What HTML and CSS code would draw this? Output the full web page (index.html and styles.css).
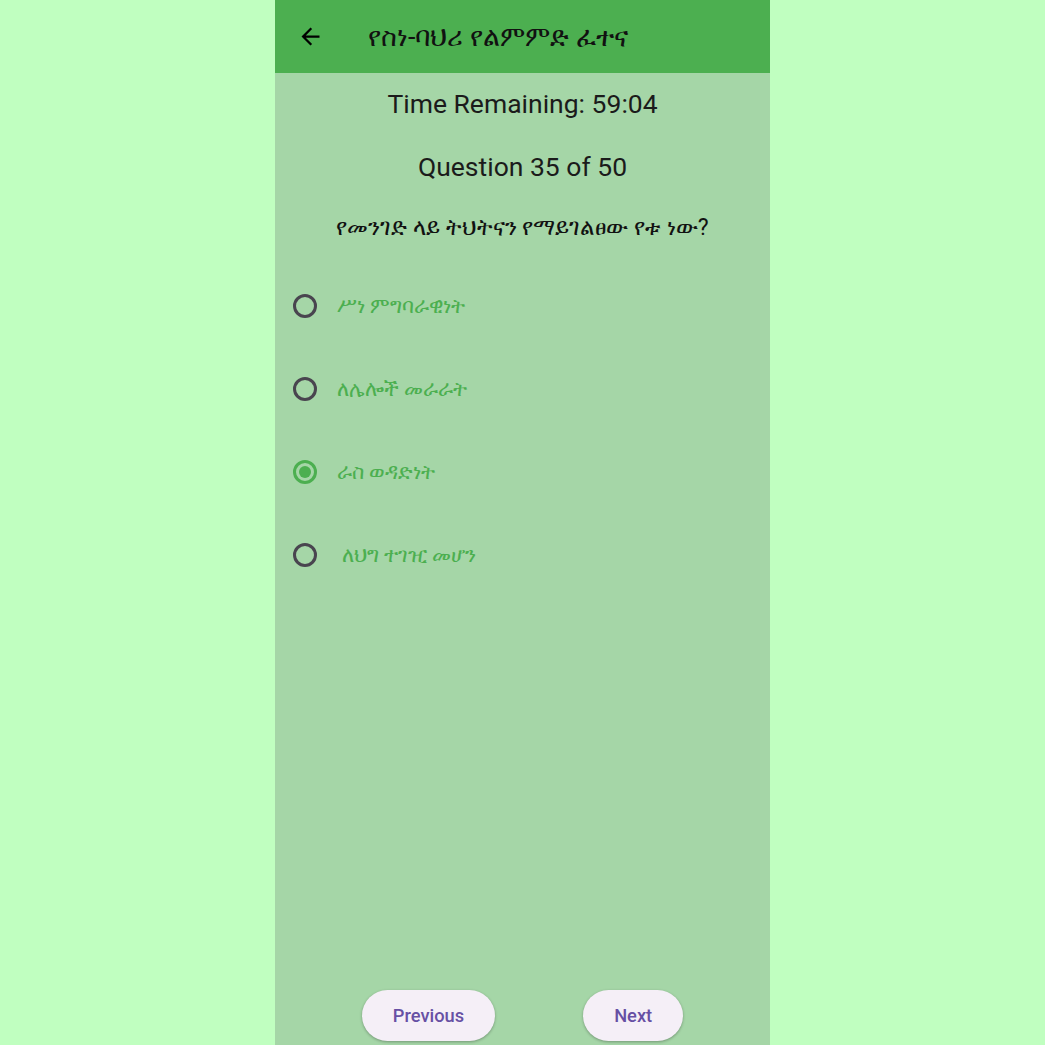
FILE: index.html
```html
<!DOCTYPE html>
<html lang="am">
<head>
<meta charset="utf-8">
<link rel="stylesheet" href="styles.css">
</head>
<body>
<div class="phone">
  <header class="appbar">
    <svg class="back" width="27" height="27" viewBox="0 0 24 24"><path d="M20 11H7.83l5.59-5.59L12 4l-8 8 8 8 1.41-1.41L7.83 13H20v-2z" fill="#000"/></svg>
    <h1 class="title">የስነ-ባህሪ የልምምድ ፈተና</h1>
  </header>
  <main class="content">
    <div class="timer">Time Remaining: 59:04</div>
    <div class="counter">Question 35 of 50</div>
    <div class="question">የመንገድ ላይ ትህትናን የማይገልፀው የቱ ነው?</div>
    <ul class="options">
      <li class="option"><span class="radio"></span><span class="label">ሥነ ምግባራዊነት</span></li>
      <li class="option"><span class="radio"></span><span class="label">ለሌሎች መራራት</span></li>
      <li class="option"><span class="radio checked"></span><span class="label">ራስ ወዳድነት</span></li>
      <li class="option"><span class="radio"></span><span class="label">&nbsp;ለህግ ተገዢ መሆን</span></li>
    </ul>
    <div class="nav">
      <button class="btn">Previous</button>
      <button class="btn">Next</button>
    </div>
  </main>
</div>
</body>
</html>
```
FILE: styles.css
```css
html, body { margin: 0; padding: 0; }
body {
  background: #c0ffc0;
  font-family: Roboto, "Noto Sans", "DejaVu Sans", sans-serif;
  display: flex;
  justify-content: center;
  height: 1045px;
  overflow: hidden;
}
.phone {
  width: 495px;
  height: 1045px;
  display: flex;
  flex-direction: column;
  background: #a5d6a7;
}
.appbar {
  height: 73px;
  flex: none;
  background: #4caf50;
  display: flex;
  align-items: center;
  padding-left: 22px;
  box-sizing: border-box;
}
.back { flex: none; }
.title {
  margin: 0 0 0 44px;
  font-weight: 400;
  font-size: 27px;
  color: #111;
}
.content {
  flex: 1;
  display: flex;
  flex-direction: column;
  align-items: center;
  padding-top: 16px;
}
.timer { font-size: 26.5px; color: #1b1b1b; line-height: 30px; }
.counter { font-size: 26.5px; color: #1b1b1b; line-height: 30px; margin-top: 33px; }
.question { font-size: 23px; color: #111; line-height: 28px; margin-top: 32px; }
.options {
  list-style: none;
  margin: 40px 0 0 0;
  padding: 0 0 0 18px;
  align-self: stretch;
  display: flex;
  flex-direction: column;
  gap: 35px;
}
.option { display: flex; align-items: center; height: 48px; }
.radio {
  width: 24px; height: 24px;
  border: 3px solid #49454f;
  border-radius: 50%;
  box-sizing: border-box;
  flex: none;
  position: relative;
}
.radio.checked { border-color: #4caf50; }
.radio.checked::after {
  content: "";
  position: absolute;
  left: 50%; top: 50%;
  width: 12px; height: 12px;
  margin: -6px 0 0 -6px;
  background: #4caf50;
  border-radius: 50%;
}
.label { margin-left: 20px; font-size: 20.5px; color: #4caf50; }
.nav {
  margin-top: auto;
  display: flex;
  gap: 88px;
  padding-bottom: 4px;
}
.btn {
  font-family: Roboto, sans-serif;
  font-weight: 500;
  font-size: 18.3px;
  color: #6750a4;
  background: #f5eff7;
  border: none;
  border-radius: 26px;
  height: 51px;
  padding: 0 31px;
  box-shadow: 0 1px 3px rgba(0,0,0,0.3);
}
```
